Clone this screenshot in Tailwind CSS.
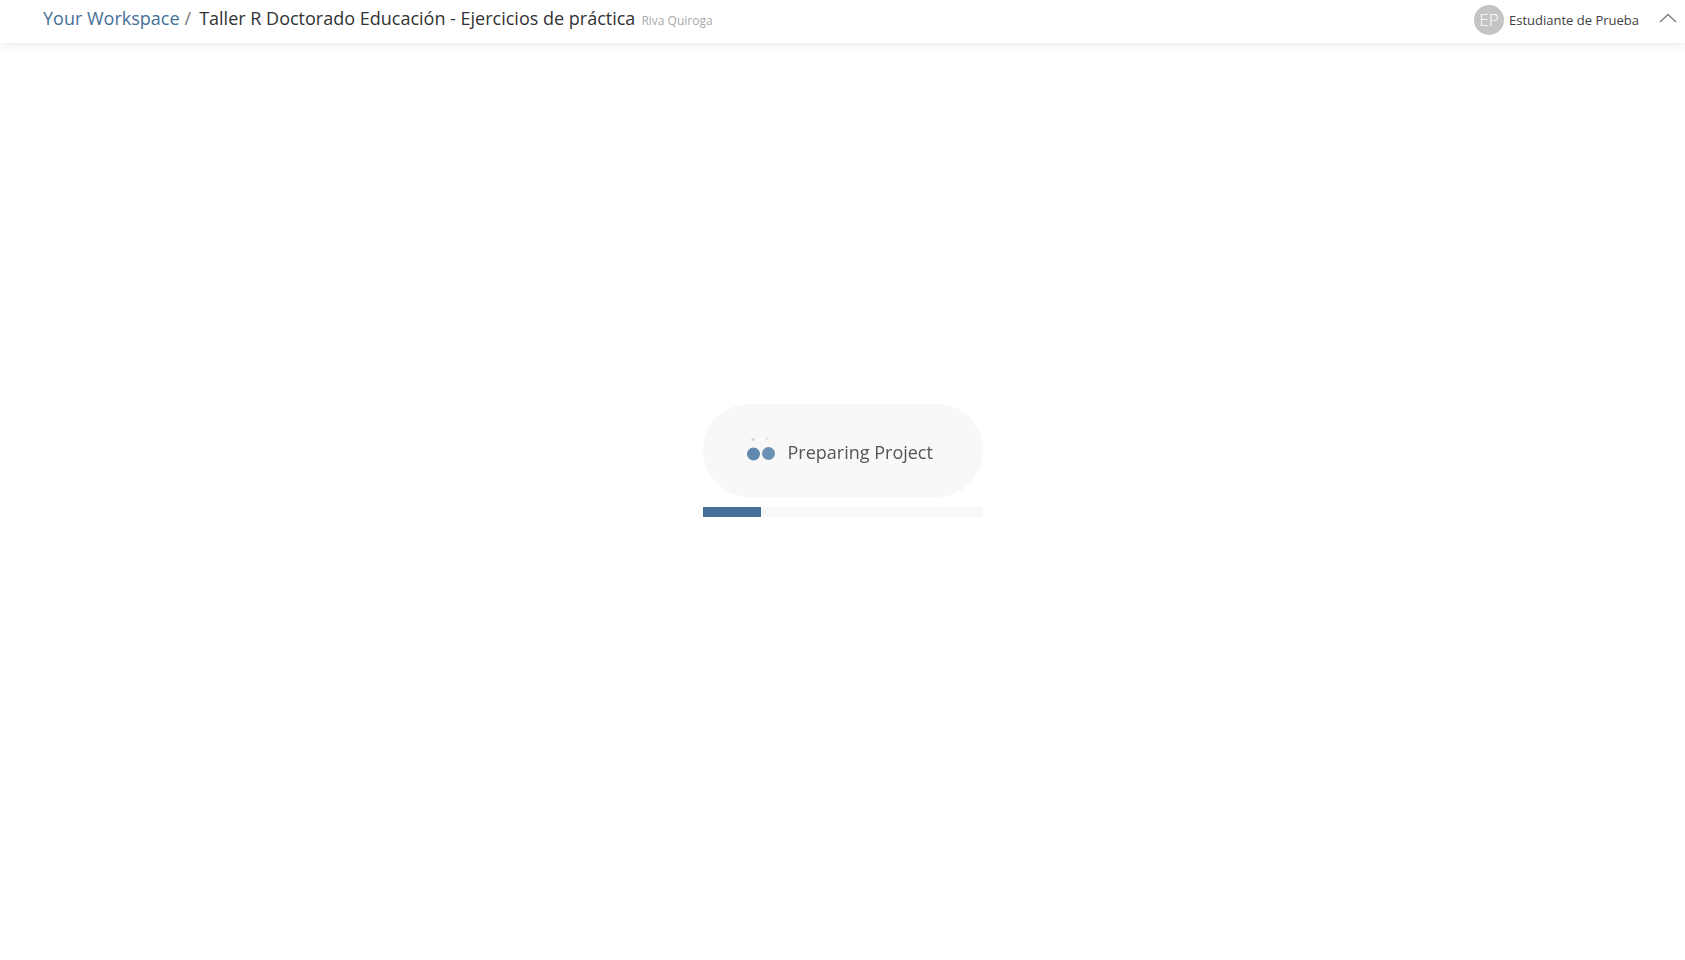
<!DOCTYPE html>
<html><head><meta charset="utf-8"><script src="https://cdn.jsdelivr.net/npm/@tailwindcss/browser@4"></script></head>
<body class="bg-white font-['Open_Sans',sans-serif] h-[960px] overflow-hidden">
<header class="h-[43px] flex items-center justify-between bg-white shadow-[0_0_10px_rgba(0,0,0,0.13)] pl-[43px] pr-[8px]">
  <div class="flex items-baseline whitespace-nowrap -mt-[6px]">
    <a class="text-[18px] text-[#447099]">Your Workspace</a>
    <span class="text-[18px] text-[#777] ml-[5px] mr-[8px]">/</span>
    <span class="text-[18px] text-[#333]">Taller R Doctorado Educación - Ejercicios de práctica</span>
    <span class="text-[12px] text-[#aaa] ml-[6px]">Riva Quiroga</span>
  </div>
  <div class="flex items-center">
    <div class="w-[30px] h-[30px] rounded-full bg-[#c4c4c4] text-white text-[17px] font-light flex items-center justify-center mt-[-3px]">EP</div>
    <span class="text-[13px] text-[#404040] ml-[5px] -mt-[2px]">Estudiante de Prueba</span>
    <svg class="ml-[20px] -mt-[8px]" width="18" height="10" viewBox="0 0 18 10" fill="none" stroke="#808080" stroke-width="1.5"><path d="M1 9 L9 1.5 L17 9"/></svg>
  </div>
</header>
<main class="flex flex-col items-center pt-[361px] blur-[0.5px]">
  <div class="w-[280px] h-[93px] rounded-[46px] bg-[#f8f8f8] flex items-center pl-[43px]">
    <svg class="mt-[-3px]" width="30" height="27" viewBox="0 0 30 27"><circle cx="7.500" cy="18" r="6.500" fill="#5e88ae"/><circle cx="22.500" cy="17.500" r="6.500" fill="#6b92b5"/><circle cx="7" cy="3.500" r="1.600" fill="#c7d6e3"/><circle cx="21" cy="2.500" r="1.200" fill="#d3dfe9"/></svg>
    <span class="text-[18px] text-[#555] ml-[12px] mt-[4px]">Preparing Project</span>
  </div>
  <div class="w-[280px] h-[10px] mt-[10px] bg-[#f8f8f8]"><div class="h-full w-[58px] bg-[#447099]"></div></div>
</main>
</body></html>
